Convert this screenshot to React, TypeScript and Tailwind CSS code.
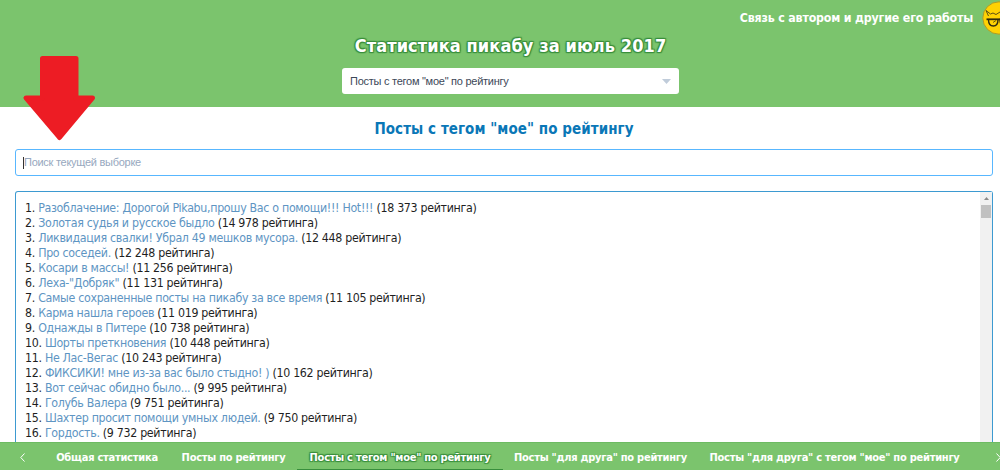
import { useState } from 'react'

type Post = {
  title: string
  rating: string
}

const POSTS: Post[] = [
  { title: 'Разоблачение: Дорогой Pikabu,прошу Вас о помощи!!! Hot!!!', rating: '18 373' },
  { title: 'Золотая судья и русское быдло', rating: '14 978' },
  { title: 'Ликвидация свалки! Убрал 49 мешков мусора.', rating: '12 448' },
  { title: 'Про соседей.', rating: '12 248' },
  { title: 'Косари в массы!', rating: '11 256' },
  { title: 'Леха-"Добряк"', rating: '11 131' },
  { title: 'Самые сохраненные посты на пикабу за все время', rating: '11 105' },
  { title: 'Карма нашла героев', rating: '11 019' },
  { title: 'Однажды в Питере', rating: '10 738' },
  { title: 'Шорты преткновения', rating: '10 448' },
  { title: 'Не Лас-Вегас', rating: '10 243' },
  { title: 'ФИКСИКИ! мне из-за вас было стыдно! )', rating: '10 162' },
  { title: 'Вот сейчас обидно было...', rating: '9 995' },
  { title: 'Голубь Валера', rating: '9 751' },
  { title: 'Шахтер просит помощи умных людей.', rating: '9 750' },
  { title: 'Гордость.', rating: '9 732' },
]

const TABS = [
  { label: 'Общая статистика', width: 'w-[126px]' },
  { label: 'Посты по рейтингу', width: 'w-[127px]' },
  { label: 'Посты с тегом "мое" по рейтингу', width: 'w-[206px]' },
  { label: 'Посты "для друга" по рейтингу', width: 'w-[195px]' },
  { label: 'Посты "для друга" с тегом "мое" по рейтингу', width: 'w-[273px]' },
]

function Avatar() {
  return (
    <svg className="block h-[34px] w-[34px]" viewBox="0 0 34 34" fill="none" aria-hidden>
      <circle cx="17" cy="17" r="16.2" fill="#ffd203" stroke="#a99b2d" strokeWidth="1" />
      <path
        d="M6.500 15 4 9.500l4.500 3.500 2.500-1 3 1.500 4-2.500"
        stroke="#5c4e14"
        strokeWidth="1"
        strokeLinejoin="round"
      />
      <path d="M4.500 18.300h14" stroke="#2f2b10" strokeWidth="1.800" />
      <path d="M6.500 18.500c0 4.200 1.500 6.500 4.800 6.500 3.200 0 4.700-2.800 4.700-6.500" stroke="#2f2b10" strokeWidth="1.400" />
      <path d="M11 21.500l3-2" stroke="#6b5a12" strokeWidth="1" />
      <path d="M18 18.500c0 4 1.500 6.500 5 6.500s5.500-3 5.500-6.500z" stroke="#2f2b10" strokeWidth="1.400" />
    </svg>
  )
}

function RedArrow() {
  return (
    <svg
      className="pointer-events-none absolute top-[55px] left-[22px]"
      width="75"
      height="88"
      viewBox="0 0 75 88"
      aria-hidden
    >
      <path
        d="M20.500 3.500h33.500v39.500H70.500L37.500 82.500 4 43H20.500z"
        fill="#ed1c24"
        stroke="#ed1c24"
        strokeWidth="5"
        strokeLinejoin="round"
      />
    </svg>
  )
}

function Header() {
  return (
    <header className="h-[107px] shrink-0 overflow-hidden bg-[#7bc46d]">
      <div className="-mr-4 flex h-[35px] items-center justify-end gap-[9px]">
        <a className="text-[12.3px] leading-4 font-bold tracking-[-0.17px] whitespace-nowrap text-white">
          Связь с автором и другие его работы
        </a>
        <Avatar />
      </div>
      <h1 className="ml-[21px] text-center text-[18px] leading-[22px] font-bold tracking-[0.1px] text-white [text-shadow:-1px_-1px_1px_#388e3c,1px_-1px_1px_#388e3c,-1px_1px_1px_#388e3c,1px_1px_1px_#388e3c,0_0_2px_#388e3c]">
        Статистика пикабу за июль 2017
      </h1>
      <div className="mt-[11px] ml-[342px] flex h-[26px] w-[337px] items-center justify-between rounded-[3px] bg-white pr-2 pl-2 font-['Liberation_Sans',sans-serif] text-[11px] tracking-[-0.26px] text-[#3c4858]">
        <span>Посты с тегом "мое" по рейтингу</span>
        <svg width="9" height="5" viewBox="0 0 9 5" aria-hidden>
          <path d="M0 0h9L4.500 5z" fill="#c0ccda" />
        </svg>
      </div>
    </header>
  )
}

function PostList() {
  return (
    <section className="mt-[15px] ml-[15px] flex min-h-0 w-[978px] flex-1 rounded-t-[3px] border border-b-0 border-[#3d9ad1]">
      <ol className="flex-1 pt-[9px] pl-[9px] text-[12.3px] leading-[15px] tracking-[-0.31px] text-[#1f1f1f]">
        {POSTS.map((post, index) => (
          <li key={post.title} className="whitespace-nowrap">
            {index + 1}. <a className="text-[#5e95c3]">{post.title}</a> ({post.rating} рейтинга)
          </li>
        ))}
      </ol>
      <div className="flex w-[12px] flex-col items-center bg-[#f1f1f1]">
        <svg className="my-[5px] block shrink-0" width="5" height="3" viewBox="0 0 5 3" aria-hidden>
          <path d="M2.500 0 5 3H0z" fill="#8a8a8a" />
        </svg>
        <div className="h-[13px] w-[10px] bg-[#c1c1c1]" />
      </div>
    </section>
  )
}

export default function App() {
  const [activeTab, setActiveTab] = useState(2)
  const [query, setQuery] = useState('')

  return (
    <div className="relative flex h-[470px] w-[1000px] flex-col overflow-hidden bg-white font-['DejaVu_Sans_Condensed','DejaVu_Sans',sans-serif]">
      <Header />
      <main className="flex min-h-0 flex-1 flex-col">
        <h2 className="mt-[12px] ml-[8px] text-center text-[15px] leading-5 font-bold tracking-[0.06px] text-[#0a77b7]">
          Посты с тегом "мое" по рейтингу
        </h2>
        <div className="mt-[10px] ml-[15px] flex h-[27px] w-[978px] shrink-0 items-center rounded-[3px] border border-[#58b7ff] pl-[7px]">
          <span className="h-3 w-px bg-[#333]" />
          <input
            value={query}
            onChange={(e) => setQuery(e.target.value)}
            placeholder="Поиск текущей выборке"
            className="w-full font-['Liberation_Sans',sans-serif] text-[11px] tracking-[-0.27px] outline-none placeholder:text-[#97a8be]"
          />
        </div>
        <PostList />
      </main>
      <nav className="flex h-7 w-[1010px] shrink-0 items-stretch border-t border-[#6dbb62] bg-[#7bc46d] text-[11px] font-bold tracking-[-0.25px] text-white">
        <button type="button" className="flex w-[44px] items-center justify-center pt-[2px]" aria-label="Назад">
          <svg width="5" height="9" viewBox="0 0 5 9" fill="none" stroke="currentColor" aria-hidden>
            <path d="M4.500.5.8 4.500l3.700 4" />
          </svg>
        </button>
        {TABS.map((tab, index) => (
          <button
            key={tab.label}
            type="button"
            onClick={() => setActiveTab(index)}
            className={`${tab.width} flex shrink-0 items-center justify-center border-b pt-[5px] whitespace-nowrap ${
              index === activeTab
                ? 'border-[#388e3c] [text-shadow:-1px_-1px_1px_#388e3c,1px_-1px_1px_#388e3c,-1px_1px_1px_#388e3c,1px_1px_1px_#388e3c]'
                : 'border-transparent'
            }`}
          >
            {tab.label}
          </button>
        ))}
        <button type="button" className="ml-[25px] flex items-center pt-[2px]" aria-label="Вперёд">
          <svg width="5" height="9" viewBox="0 0 5 9" fill="none" stroke="currentColor" aria-hidden>
            <path d="M.5.5 4.200 4.500l-3.700 4" />
          </svg>
        </button>
      </nav>
      <RedArrow />
    </div>
  )
}
